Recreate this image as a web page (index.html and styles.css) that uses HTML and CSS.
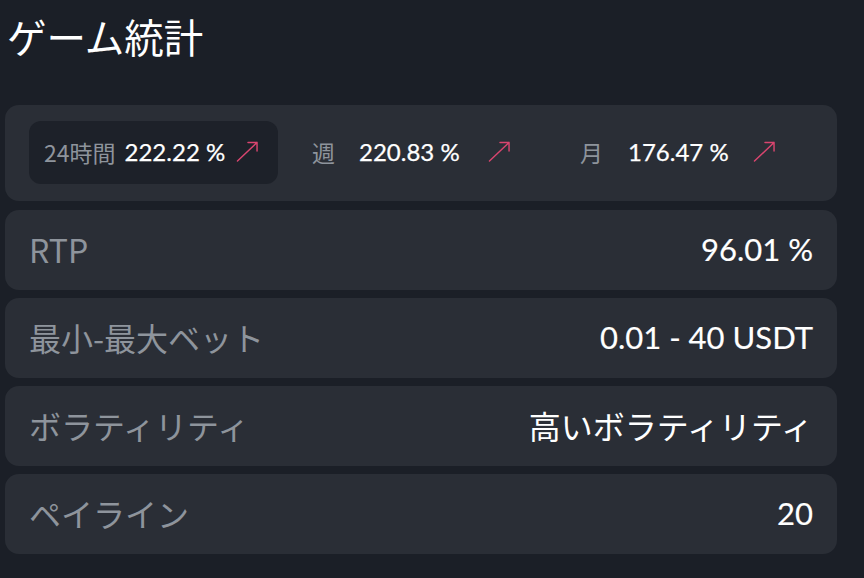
FILE: index.html
```html
<!DOCTYPE html>
<html lang="ja">
<head>
<meta charset="utf-8">
<title>ゲーム統計</title>
<link rel="stylesheet" href="styles.css">
</head>
<body>
<main class="page">
  <h1 class="title">ゲーム統計</h1>
  <section class="stats">
    <div class="period period--active period--day">
      <span class="period__label">24時間</span>
      <span class="period__value">222.22 %</span>
      <svg class="period__arrow" viewBox="0 0 24 22" aria-hidden="true"><path d="M1.5 21 L22 1.5 M12.5 1.5 H22 V10.5"/></svg>
    </div>
    <div class="period period--week">
      <span class="period__label">週</span>
      <span class="period__value">220.83 %</span>
      <svg class="period__arrow" viewBox="0 0 24 22" aria-hidden="true"><path d="M1.5 21 L22 1.5 M12.5 1.5 H22 V10.5"/></svg>
    </div>
    <div class="period period--month">
      <span class="period__label">月</span>
      <span class="period__value">176.47 %</span>
      <svg class="period__arrow" viewBox="0 0 24 22" aria-hidden="true"><path d="M1.5 21 L22 1.5 M12.5 1.5 H22 V10.5"/></svg>
    </div>
  </section>
  <div class="row"><span class="row__label">RTP</span><span class="row__value">96.01 %</span></div>
  <div class="row"><span class="row__label">最小-最大ベット</span><span class="row__value">0.01 - 40 USDT</span></div>
  <div class="row"><span class="row__label">ボラティリティ</span><span class="row__value row__value--jp">高いボラティリティ</span></div>
  <div class="row"><span class="row__label">ペイライン</span><span class="row__value">20</span></div>
</main>
</body>
</html>
```

FILE: styles.css
```css
html, body {
  margin: 0;
  padding: 0;
  background: #1b1f27;
}

body {
  font-family: "Lato", "Noto Sans CJK JP", sans-serif;
  color: #ffffff;
}

.page {
  width: 832px;
  padding: 0 0 0 5px;
  display: flex;
  flex-direction: column;
  gap: 8px;
}

.title {
  margin: 0 0 35px 0;
  padding: 10px 0 0 2px;
  font-family: "Noto Sans CJK JP", sans-serif;
  font-weight: 400;
  font-size: 39.5px;
  line-height: 52px;
  color: #ffffff;
}

.stats {
  background: #2a2e36;
  border-radius: 14px;
  padding: 16px 24px 17px 24px;
  display: grid;
  grid-template-columns: repeat(3, 249px);
  column-gap: 19px;
  margin-bottom: 1px;
}

.period {
  height: 63px;
  border-radius: 12px;
  display: flex;
  align-items: center;
  padding-left: 15px;
  padding-bottom: 2px;
  box-sizing: border-box;
}

.period--active {
  background: #1d2129;
}

.period__label {
  font-family: "Noto Sans CJK JP", sans-serif;
  font-size: 23px;
  color: #8e949c;
  min-width: 38px;
  margin-right: 9px;
}

.period__value {
  font-size: 24px;
  font-weight: 400;
  color: #ffffff;
  -webkit-text-stroke: 0.25px #ffffff;
}

.period__arrow {
  width: 23px;
  height: 21px;
  fill: none;
  stroke: #d9456f;
  stroke-width: 1.5;
  stroke-linecap: round;
  stroke-linejoin: round;
}

.period--day .period__arrow { margin-left: 11px; }
.period--week .period__arrow { margin-left: 28px; }
.period--month .period__label { margin-right: 10px; }
.period--month .period__arrow { margin-left: 24px; }

.row {
  height: 80px;
  background: #2a2e36;
  border-radius: 14px;
  display: flex;
  align-items: center;
  justify-content: space-between;
  padding: 0 24px 3px 24px;
  box-sizing: border-box;
}

.row__label {
  font-family: "Noto Sans CJK JP", sans-serif;
  font-size: 32px;
  color: #8e949c;
}

.row__value {
  font-size: 31px;
  color: #ffffff;
  -webkit-text-stroke: 0.15px #ffffff;
}

.row__value--jp {
  font-family: "Noto Sans CJK JP", sans-serif;
  font-size: 32px;
  -webkit-text-stroke: 0;
}
```
